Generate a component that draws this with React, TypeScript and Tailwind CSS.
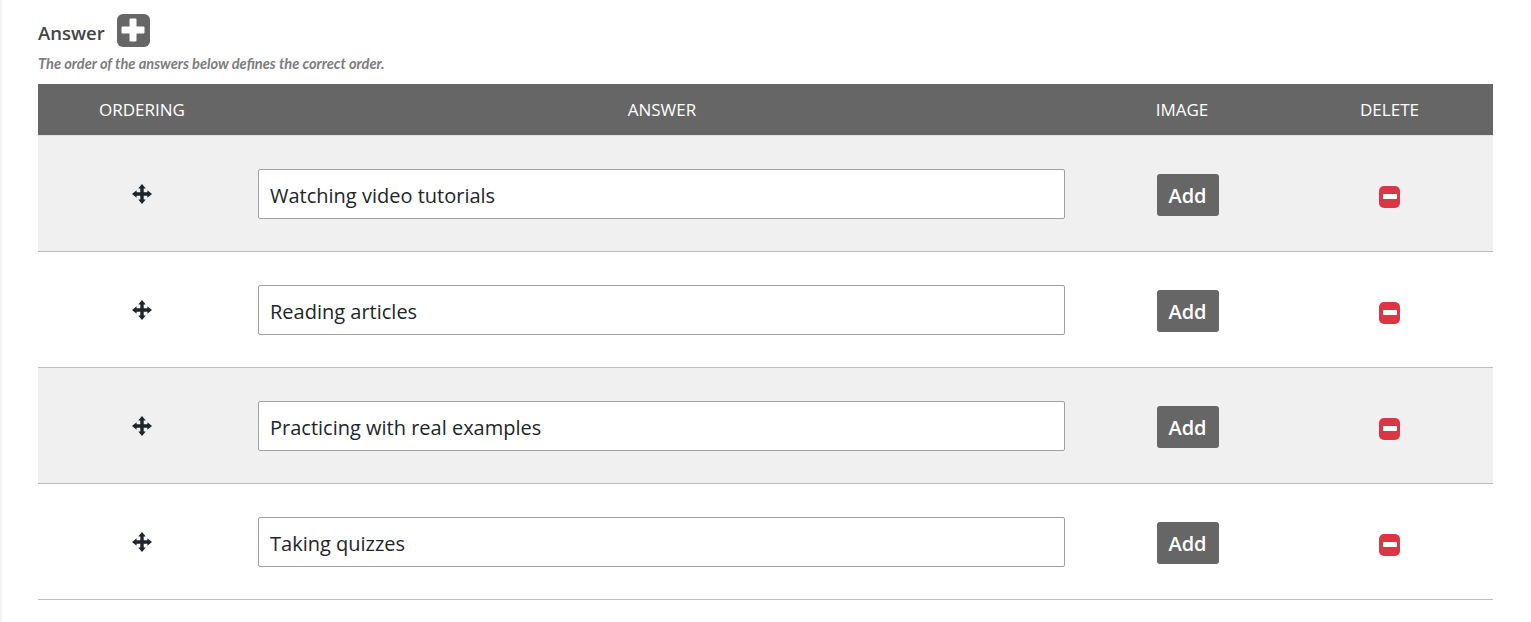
import { useState } from "react";

const answers = [
  "Watching video tutorials",
  "Reading articles",
  "Practicing with real examples",
  "Taking quizzes",
];

function MoveIcon() {
  return (
    <svg width="20" height="20" viewBox="0 0 20 20" fill="#212529">
      <path d="M10 0 13.800 4.600H11.700V8.300H15.400V6.200L20 10 15.400 13.800V11.700H11.700V15.400H13.800L10 20 6.200 15.400H8.300V11.700H4.600V13.800L0 10 4.600 6.200V8.300H8.300V4.600H6.200Z" />
    </svg>
  );
}

function AnswerRow({ value, shaded }: { value: string; shaded: boolean }) {
  const [text, setText] = useState(value);

  return (
    <div
      className={`grid grid-cols-[208px_832px_208px_1fr] h-[116px] items-center border-b border-[#bdbdbd] ${
        shaded ? "bg-[#f0f0f0]" : "bg-white"
      }`}
    >
      <div className="flex justify-center">
        <MoveIcon />
      </div>
      <div className="px-3">
        <input
          value={text}
          onChange={(e) => setText(e.target.value)}
          className="w-[807px] h-[50px] pt-[3px] px-[11px] bg-white border border-[#a0a0a0] rounded-[2px] text-[20px] text-[#212529] font-['Open_Sans',sans-serif] outline-none"
        />
      </div>
      <div className="flex justify-center pt-[2px]">
        <button className="ml-[11px] w-[62px] h-[42px] pt-[2px] rounded-[3px] bg-[#666666] text-white text-[20px] font-semibold font-['Open_Sans',sans-serif]">
          Add
        </button>
      </div>
      <div className="flex justify-center pt-[6px]">
        <button
          aria-label="Delete"
          className="flex items-center justify-center w-[21px] h-[22px] rounded-[5px] bg-[#dc3545]"
        >
          <span className="block w-[14px] h-[5px] rounded-[1px] bg-white" />
        </button>
      </div>
    </div>
  );
}

export default function App() {
  return (
    <div className="min-h-[622px] bg-white pl-[38px] pr-[38px] border-l-2 border-[#f3f3f3] font-['Lato',sans-serif] box-border overflow-hidden">
      <div className="-ml-[2px] w-[1455px]">
        <div className="flex items-center h-[34px] mt-[13px]">
          <span className="pt-[6px] text-[18.5px] text-[#444444] font-['Open_Sans',sans-serif] font-semibold">Answer</span>
          <button
            aria-label="Add answer"
            className="ml-[12px] flex items-center justify-center w-[33px] h-[33px] rounded-[6px] bg-[#666666]"
          >
            <svg width="24" height="24" viewBox="0 0 24 24" fill="white">
              <path d="M8.500 1.500a1 1 0 0 1 1-1h5a1 1 0 0 1 1 1V8.500h7a1 1 0 0 1 1 1v5a1 1 0 0 1-1 1h-7v7a1 1 0 0 1-1 1h-5a1 1 0 0 1-1-1v-7h-7a1 1 0 0 1-1-1v-5a1 1 0 0 1 1-1h7z" />
            </svg>
          </button>
        </div>
        <p className="mt-[8px] text-[14.6px] leading-[18px] font-bold italic text-[#7d7d7d]">
          The order of the answers below defines the correct order.
        </p>
        <div className="mt-[11px] grid grid-cols-[208px_832px_208px_1fr] h-[52px] items-center bg-[#666666] text-white text-[17px] text-center font-['Open_Sans',sans-serif] border-b border-[#e0e0e0]">
          <div>ORDERING</div>
          <div>ANSWER</div>
          <div>IMAGE</div>
          <div>DELETE</div>
        </div>
        {answers.map((a, i) => (
          <AnswerRow key={a} value={a} shaded={i % 2 === 0} />
        ))}
      </div>
    </div>
  );
}
